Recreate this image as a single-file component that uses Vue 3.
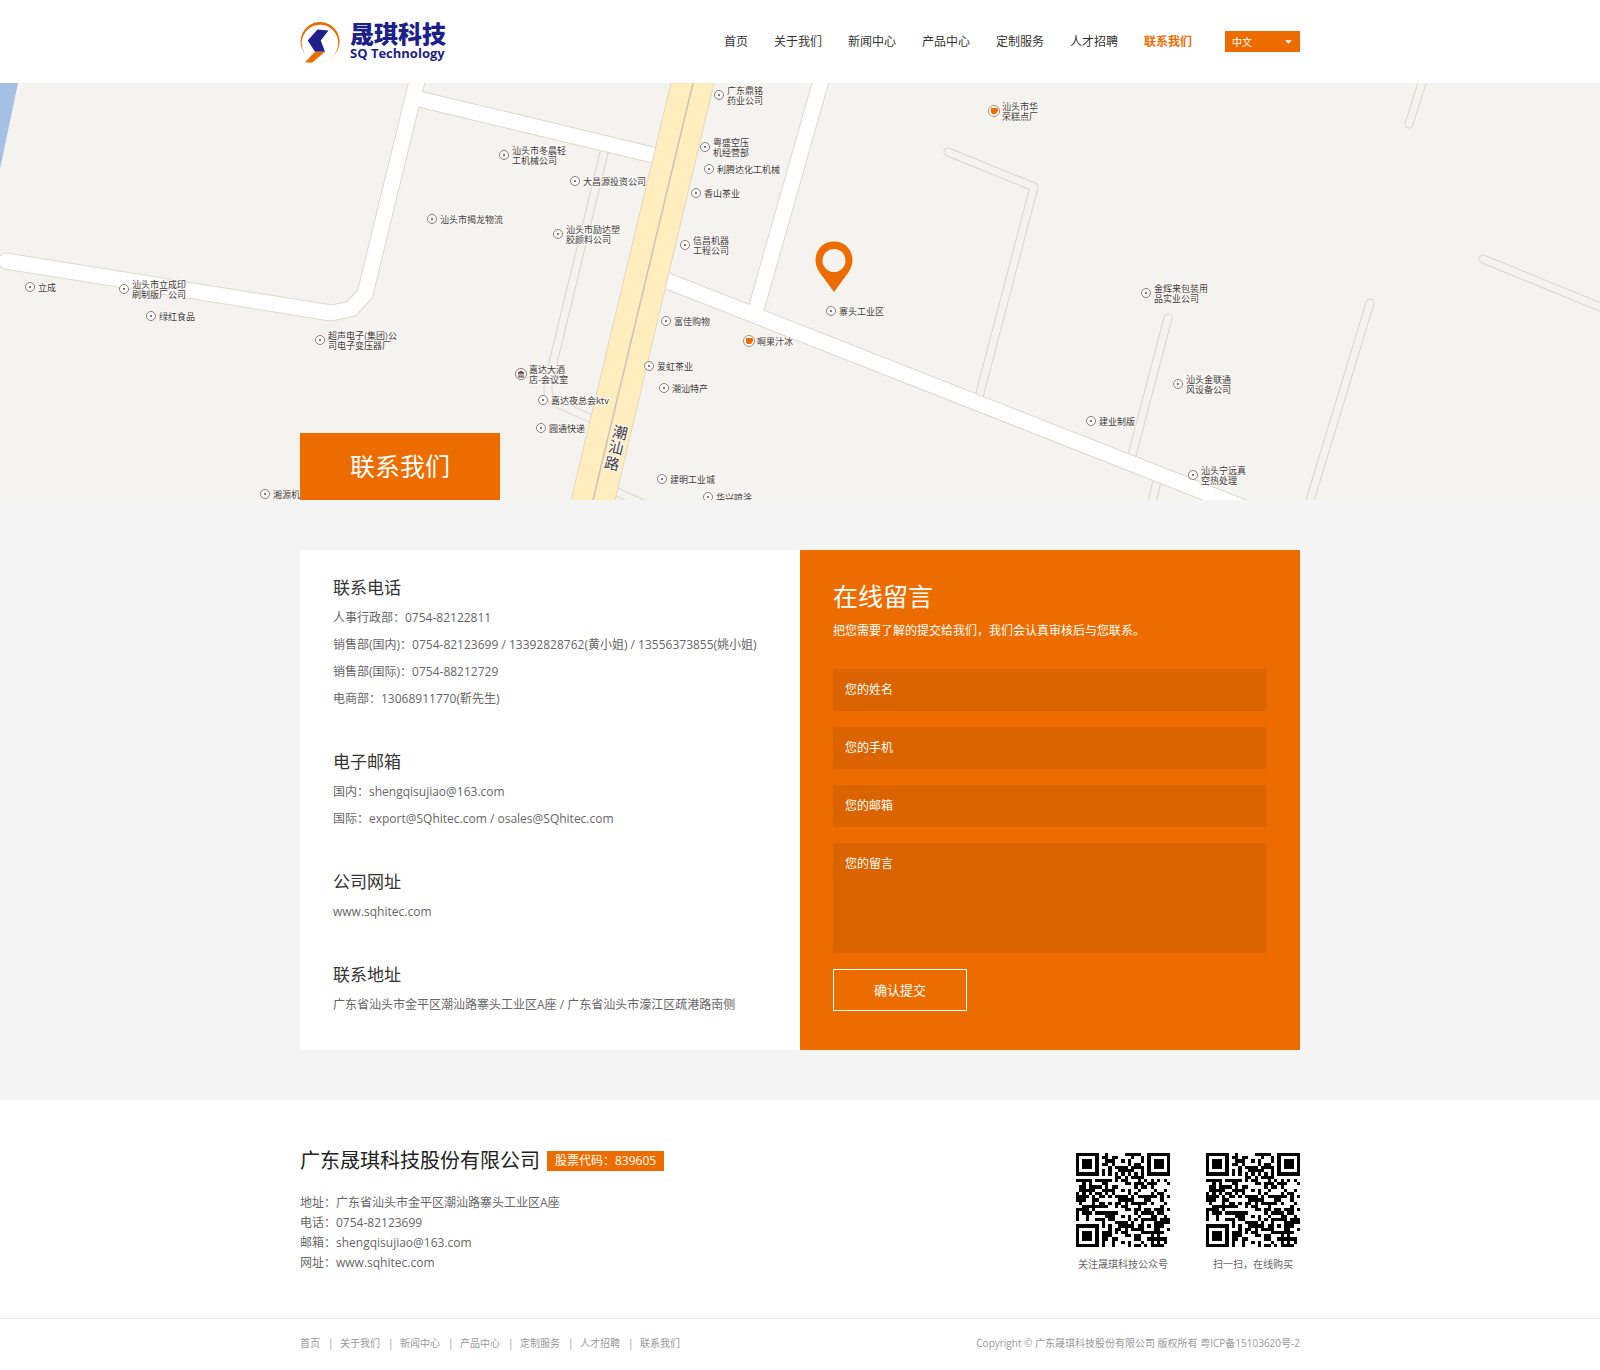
<script setup>
import { reactive, ref } from 'vue'

const links = ['首页', '关于我们', '新闻中心', '产品中心', '定制服务', '人才招聘', '联系我们']
const current = '联系我们'
const lang = ref('中文')
const form = reactive({ name: '', phone: '', mail: '', message: '' })

const fields = [
  { key: 'name', label: '您的姓名', type: 'text' },
  { key: 'phone', label: '您的手机', type: 'tel' },
  { key: 'mail', label: '您的邮箱', type: 'email' }
]

const contacts = [
  {
    title: '联系电话',
    lines: [
      '人事行政部：0754-82122811',
      '销售部(国内)：0754-82123699 / 13392828762(黄小姐) / 13556373855(姚小姐)',
      '销售部(国际)：0754-88212729',
      '电商部：13068911770(靳先生)'
    ]
  },
  {
    title: '电子邮箱',
    lines: ['国内：shengqisujiao@163.com', '国际：export@SQhitec.com / osales@SQhitec.com']
  },
  { title: '公司网址', lines: ['www.sqhitec.com'] },
  { title: '联系地址', lines: ['广东省汕头市金平区潮汕路寨头工业区A座 / 广东省汕头市濠江区疏港路南侧'] }
]

const company = [
  '地址：广东省汕头市金平区潮汕路寨头工业区A座',
  '电话：0754-82123699',
  '邮箱：shengqisujiao@163.com',
  '网址：www.sqhitec.com'
]

const mainRoads = [
  'M6 178L331 230L351 226L365 211L418 -6',
  'M419 16L653 72',
  'M660 195L1260 431',
  'M822 -6L755 230'
]
const lanes = [
  'M605 66L552 284L548 304Q547 316 556 320L592 336',
  'M606 404L650 424',
  'M948 69L1034 104L979 314',
  'M1168 235L1131 376',
  'M1157 398L1151 424',
  'M1424 -6L1409 41',
  'M1483 176L1610 228',
  'M1370 220L1308 424'
]

const places = [
  { x: 30, y: 204, t: ['立成'] },
  { x: 124, y: 206, t: ['汕头市立成印', '刷制版厂公司'] },
  { x: 151, y: 233, t: ['绿红食品'] },
  { x: 320, y: 257, t: ['超声电子(集团)公', '司电子变压器厂'] },
  { x: 432, y: 136, t: ['汕头市揭龙物流'] },
  { x: 265, y: 411, t: ['湘源机'] },
  { x: 504, y: 72, t: ['汕头市冬晨轻', '工机械公司'] },
  { x: 575, y: 98, t: ['大昌源投资公司'] },
  { x: 558, y: 151, t: ['汕头市励达塑', '胶颜料公司'] },
  { x: 719, y: 12, t: ['广东鼎铭', '药业公司'] },
  { x: 705, y: 64, t: ['粤盛空压', '机经营部'] },
  { x: 709, y: 86, t: ['利腾达化工机械'] },
  { x: 696, y: 110, t: ['香山茶业'] },
  { x: 685, y: 162, t: ['信昌机器', '工程公司'] },
  { x: 831, y: 228, t: ['寨头工业区'] },
  { x: 666, y: 238, t: ['富佳购物'] },
  { x: 749, y: 258, t: ['啊果汁冰'], kind: 'cup' },
  { x: 649, y: 283, t: ['爱虹茶业'] },
  { x: 664, y: 305, t: ['潮汕特产'] },
  { x: 521, y: 291, t: ['嘉达大酒', '店-会议室'], kind: 'hotel' },
  { x: 543, y: 317, t: ['嘉达夜总会ktv'] },
  { x: 541, y: 345, t: ['圆通快递'] },
  { x: 662, y: 396, t: ['建明工业城'] },
  { x: 708, y: 414, t: ['华兴喷涂'] },
  { x: 994, y: 28, t: ['汕头市华', '荣糕点厂'], kind: 'cup' },
  { x: 1146, y: 210, t: ['金辉来包装用', '品实业公司'] },
  { x: 1178, y: 301, t: ['汕头金联通', '风设备公司'] },
  { x: 1091, y: 338, t: ['建业制版'] },
  { x: 1193, y: 392, t: ['汕头宁远真', '空热处理'] }
]

const streetName = [
  { c: '潮', x: 620, y: 350 },
  { c: '汕', x: 616, y: 365 },
  { c: '路', x: 612, y: 381 }
]

// QR code, version 3, error correction level L, mask 2
function qrModules(text) {
  const size = 29
  const dataLen = 55
  const eccLen = 15
  const bytes = [...new TextEncoder().encode(text)]
  const toBits = (v, n) => v.toString(2).padStart(n, '0')
  const stream = '0100' + toBits(bytes.length, 8) + bytes.map((b) => toBits(b, 8)).join('') + '0000'
  const words = stream.match(/.{8}/g).map((b) => parseInt(b, 2))
  for (let pad = 0xec; words.length < dataLen; pad ^= 0xec ^ 0x11) words.push(pad)

  const mul = (a, b) => {
    let z = 0
    for (let i = 7; i >= 0; i--) {
      z = (z << 1) ^ ((z >> 7) * 0x11d)
      z ^= ((b >> i) & 1) * a
    }
    return z
  }
  const gen = Array(eccLen).fill(0)
  gen[eccLen - 1] = 1
  for (let i = 0, root = 1; i < eccLen; i++, root = mul(root, 2)) {
    for (let j = 0; j < eccLen; j++) {
      gen[j] = mul(gen[j], root)
      if (j + 1 < eccLen) gen[j] ^= gen[j + 1]
    }
  }
  const ecc = Array(eccLen).fill(0)
  for (const w of words) {
    const factor = w ^ ecc.shift()
    ecc.push(0)
    gen.forEach((g, i) => (ecc[i] ^= mul(g, factor)))
  }
  const bits = [...words, ...ecc].map((w) => toBits(w, 8)).join('')

  const grid = Array.from({ length: size }, () => Array(size).fill(null))
  const set = (x, y, v) => {
    if (x >= 0 && y >= 0 && x < size && y < size) grid[y][x] = v ? 1 : 0
  }
  for (let i = 0; i < size; i++) {
    set(6, i, i % 2 === 0)
    set(i, 6, i % 2 === 0)
  }
  const square = (cx, cy, r, isLight) => {
    for (let dy = -r; dy <= r; dy++) {
      for (let dx = -r; dx <= r; dx++) {
        set(cx + dx, cy + dy, !isLight(Math.max(Math.abs(dx), Math.abs(dy))))
      }
    }
  }
  const finderLight = (d) => d === 2 || d === 4
  square(3, 3, 4, finderLight)
  square(size - 4, 3, 4, finderLight)
  square(3, size - 4, 4, finderLight)
  square(22, 22, 2, (d) => d === 1)

  const format = (1 << 3) | 2
  let rem = format
  for (let i = 0; i < 10; i++) rem = (rem << 1) ^ ((rem >> 9) * 0x537)
  const info = ((format << 10) | rem) ^ 0x5412
  const bit = (i) => (info >> i) & 1
  for (let i = 0; i < 6; i++) set(8, i, bit(i))
  set(8, 7, bit(6))
  set(8, 8, bit(7))
  set(7, 8, bit(8))
  for (let i = 9; i < 15; i++) set(14 - i, 8, bit(i))
  for (let i = 0; i < 8; i++) set(size - 1 - i, 8, bit(i))
  for (let i = 8; i < 15; i++) set(8, size - 15 + i, bit(i))
  set(8, size - 8, 1)

  let k = 0
  for (let right = size - 1; right >= 1; right -= 2) {
    if (right === 6) right = 5
    for (let v = 0; v < size; v++) {
      for (let j = 0; j < 2; j++) {
        const x = right - j
        const y = ((right + 1) & 2) === 0 ? size - 1 - v : v
        if (grid[y][x] === null) {
          grid[y][x] = Number(bits[k++] || 0) ^ (x % 3 === 0 ? 1 : 0)
        }
      }
    }
  }
  return grid
}
const qrPath = qrModules('http://www.sqhitec.com/')
  .flatMap((row, y) => row.map((v, x) => (v ? `M${x} ${y}h1v1h-1z` : '')))
  .join('')
const codes = ['关注晟琪科技公众号', '扫一扫，在线购买']
</script>

<template>
  <div class="page">
    <header class="wrap header">
      <a class="logo" href="#" aria-label="晟琪科技 SQ Technology">
        <svg class="mark" viewBox="0 0 40 44" aria-hidden="true">
          <path d="M6.500 35.500A19.500 19.500 0 1 1 31.500 37.300A18.300 18.300 0 1 0 6.500 35.500Z" fill="#ed6c00" />
          <path d="M17.500 9.500L28.500 10.500L20.700 20.500L25 31.700H15L7.700 20.500Z" fill="#1d1f8a" />
          <path d="M15 31.700H25L12 42.800L5 42.300Z" fill="#ed6c00" />
        </svg>
        <span class="brand">
          <strong>晟琪科技</strong>
          <em>SQ Technology</em>
        </span>
      </a>
      <nav class="nav" aria-label="主导航">
        <a v-for="l in links" :key="l" href="#" :class="{ active: l === current }">{{ l }}</a>
      </nav>
      <div class="lang">
        <select v-model="lang" aria-label="语言">
          <option>中文</option>
          <option>English</option>
        </select>
        <svg viewBox="0 0 8 4" aria-hidden="true"><path d="M0 0H8L4 4Z" fill="#fff" /></svg>
      </div>
    </header>

    <section class="hero">
      <svg class="map" viewBox="0 0 1600 417" role="img" aria-label="公司位置地图">
        <rect width="1600" height="417" fill="#f5f3ef" />
        <path d="M0 0H18L0 86Z" fill="#a5c0e3" />
        <g fill="none" stroke-linecap="round" stroke-linejoin="round">
          <path v-for="d in lanes" :key="d" :d="d" stroke="#dbd6cc" stroke-width="9" />
          <path v-for="d in lanes" :key="d + 'f'" :d="d" stroke="#f5f3ef" stroke-width="7" />
          <path v-for="d in mainRoads" :key="d" :d="d" stroke="#dcd9ce" stroke-width="17" />
          <path v-for="d in mainRoads" :key="d + 'f'" :d="d" stroke="#fff" stroke-width="15" />
        </g>
        <path d="M671 0H714L615 417H571Z" fill="#ffedbd" />
        <path d="M671 0L571 417M714 0L615 417" stroke="#e2d9c0" />
        <path d="M693 0L593 417" stroke="#c9c4bb" stroke-width="1.500" />
        <g v-for="p in places" :key="p.x + '-' + p.y">
          <template v-if="p.kind === 'cup'">
            <circle :cx="p.x" :cy="p.y" r="5.500" fill="#fff" stroke="#b98a6b" />
            <path :d="`M${p.x - 3} ${p.y - 3}h6l1 1v2l-1 1l-1 2h-4l-1 -2z`" fill="#ed6c00" />
          </template>
          <template v-else-if="p.kind === 'hotel'">
            <circle :cx="p.x" :cy="p.y" r="5.500" fill="#fff" stroke="#8b7d7b" />
            <path :d="`M${p.x - 3} ${p.y - 1}l3 -2l3 2zM${p.x - 2} ${p.y - 1}v4M${p.x} ${p.y - 1}v4M${p.x + 2} ${p.y - 1}v4M${p.x - 3} ${p.y + 3}h6`" fill="#5b4a4a" stroke="#5b4a4a" />
          </template>
          <template v-else>
            <circle :cx="p.x" :cy="p.y" r="4.500" fill="#fff" stroke="#8b7d7b" />
            <circle :cx="p.x" :cy="p.y" r="1" fill="#5b4a4a" />
          </template>
          <text v-for="(line, i) in p.t" :key="line" :x="p.x + 8" :y="p.t.length > 1 ? p.y - 1 + i * 10 : p.y + 4">{{ line }}</text>
        </g>
        <text v-for="s in streetName" :key="s.c" class="street" :x="s.x" :y="s.y + 5" :transform="`rotate(13 ${s.x} ${s.y})`">{{ s.c }}</text>
        <path fill-rule="evenodd" fill="#ed6c00" d="M834 158.500C844.500 158.500 852.500 166.500 852.500 177C852.500 182 850.500 186 848 190L834 209L820 190C817.500 186 815.500 182 815.500 177C815.500 166.500 823.500 158.500 834 158.500ZM834 166A11.500 11.500 0 1 0 834 189A11.500 11.500 0 1 0 834 166Z" />
      </svg>
      <div class="hero-title"><div class="wrap"><h1>联系我们</h1></div></div>
    </section>

    <main class="band">
      <div class="wrap panels">
        <section class="info">
          <div v-for="c in contacts" :key="c.title" class="block">
            <h2>{{ c.title }}</h2>
            <p v-for="l in c.lines" :key="l">{{ l }}</p>
          </div>
        </section>
        <form class="form" @submit.prevent>
          <h2>在线留言</h2>
          <p>把您需要了解的提交给我们，我们会认真审核后与您联系。</p>
          <div v-for="f in fields" :key="f.key" class="field">
            <input :id="f.key" v-model="form[f.key]" :type="f.type" />
            <label v-show="!form[f.key]" :for="f.key">{{ f.label }}</label>
          </div>
          <div class="field">
            <textarea id="message" v-model="form.message"></textarea>
            <label v-show="!form.message" for="message">您的留言</label>
          </div>
          <button type="submit">确认提交</button>
        </form>
      </div>
    </main>

    <footer>
      <div class="wrap about">
        <div>
          <div class="company">
            <h2>广东晟琪科技股份有限公司</h2>
            <span class="stock">股票代码：839605</span>
          </div>
          <address>
            <p v-for="l in company" :key="l">{{ l }}</p>
          </address>
        </div>
        <div class="codes">
          <figure v-for="c in codes" :key="c">
            <svg viewBox="0 0 29 29" shape-rendering="crispEdges" role="img" :aria-label="c"><path :d="qrPath" fill="#000" /></svg>
            <figcaption>{{ c }}</figcaption>
          </figure>
        </div>
      </div>
      <div class="bottom">
        <div class="wrap bottom-row">
          <nav class="foot-nav" aria-label="页脚导航">
            <template v-for="(l, i) in links" :key="l">
              <span v-if="i">|</span>
              <a href="#">{{ l }}</a>
            </template>
          </nav>
          <small>Copyright © 广东晟琪科技股份有限公司 版权所有 粤ICP备15103620号-2</small>
        </div>
      </div>
    </footer>
  </div>
</template>

<style>
body {
  margin: 0;
}
</style>

<style scoped>
.page {
  background: #fff;
  color: #666;
  font: 12px/20px "Open Sans", "Noto Sans CJK SC", sans-serif;
}
.page * {
  box-sizing: border-box;
}
h1, h2, p, figure {
  margin: 0;
  font-weight: 400;
}
a {
  color: inherit;
  text-decoration: none;
}
.wrap {
  max-width: 1000px;
  margin: 0 auto;
}
.header {
  display: flex;
  align-items: center;
  height: 83px;
}
.logo {
  display: flex;
  align-items: center;
  gap: 10px;
  margin-right: auto;
  color: #1d1f8a;
}
.mark {
  width: 40px;
  height: 44px;
}
.brand {
  padding-bottom: 4px;
}
.brand strong {
  display: block;
  font: 900 24px/26px "Noto Sans CJK SC", sans-serif;
}
.brand em {
  display: block;
  font: 700 13px/14px "Open Sans", sans-serif;
}
.nav {
  display: flex;
  gap: 26px;
  margin-right: 33px;
  color: #333;
}
.nav .active {
  color: #ed6c00;
  font-weight: 700;
}
.lang {
  position: relative;
  width: 75px;
}
.lang select {
  display: block;
  width: 100%;
  height: 21px;
  padding: 0 7px;
  border: 0;
  border-radius: 0;
  appearance: none;
  background: #ed6c00;
  color: #fff;
  font: 10px/21px "Noto Sans CJK SC", sans-serif;
}
.lang svg {
  position: absolute;
  top: 9px;
  right: 8px;
  width: 7px;
  height: 4px;
  pointer-events: none;
}
.hero {
  position: relative;
}
.map {
  display: block;
  width: 100%;
  height: auto;
}
.map text {
  font: 9px "Noto Sans CJK SC", sans-serif;
  fill: #443a3a;
  stroke: #f9f8f5;
  stroke-width: 2px;
  paint-order: stroke;
}
.map .street {
  font-size: 15px;
  text-anchor: middle;
}
.hero-title {
  position: absolute;
  right: 0;
  bottom: 0;
  left: 0;
}
h1 {
  width: 200px;
  background: #ed6c00;
  color: #fff;
  font-size: 25px;
  line-height: 67px;
  text-align: center;
}
.band {
  padding: 50px 0;
  background: #f4f4f4;
}
.panels {
  display: grid;
  grid-template-columns: 1fr 1fr;
  min-height: 500px;
}
.info {
  padding: 25px 0 25px 33px;
  background: #fff;
  white-space: nowrap;
}
.block + .block {
  margin-top: 37px;
}
.block h2 {
  margin-bottom: 3px;
  color: #333;
  font-size: 17px;
  line-height: 26px;
}
.block p {
  line-height: 27px;
}
.form {
  padding: 28px 33px;
  background: #ed6c00;
  color: #fff;
}
.form h2 {
  font-size: 25px;
  line-height: 36px;
}
.form p {
  margin: 7px 0 28px;
}
.field {
  position: relative;
  margin-bottom: 16px;
}
.field label {
  position: absolute;
  top: 11px;
  left: 12px;
  cursor: text;
}
input, textarea {
  display: block;
  width: 100%;
  height: 42px;
  padding: 11px 12px;
  border: 0;
  border-radius: 0;
  background: #db6400;
  color: #fff;
  font: inherit;
}
textarea {
  height: 110px;
  resize: none;
}
button {
  width: 134px;
  height: 42px;
  border: 1px solid #fff;
  background: none;
  color: #fff;
  font: inherit;
  font-size: 13px;
}
.about {
  display: flex;
  justify-content: space-between;
  padding: 47px 0 44px;
}
.company {
  display: flex;
  align-items: center;
  gap: 7px;
}
.company h2 {
  color: #222;
  font-size: 20px;
  line-height: 28px;
}
.stock {
  padding: 0 8px;
  background: #ed6c00;
  color: #fff;
}
address {
  margin-top: 18px;
  font-style: normal;
}
.codes {
  display: flex;
  gap: 36px;
  padding-top: 6px;
}
figure {
  width: 94px;
}
figure svg {
  display: block;
  width: 94px;
  height: 94px;
}
figcaption {
  margin-top: 7px;
  font-size: 10px;
  text-align: center;
}
.bottom {
  border-top: 1px solid #e5e5e5;
}
.bottom-row {
  display: flex;
  justify-content: space-between;
  padding: 14px 0 15px;
  color: #999;
  font-size: 10px;
}
.foot-nav {
  display: flex;
  gap: 8px;
}
.foot-nav span {
  width: 4px;
  text-align: center;
}
small {
  font-size: 10px;
}
</style>
